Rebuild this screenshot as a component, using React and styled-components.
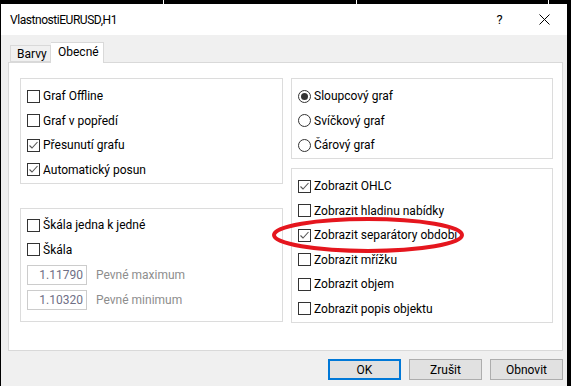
import React from "react";
import styled, { createGlobalStyle } from "styled-components";

const GlobalStyle = createGlobalStyle`
  html, body {
    margin: 0;
    padding: 0;
    background: #000;
  }
  body {
    font-family: Roboto, "Liberation Sans", Arial, sans-serif;
    font-size: 12px;
    color: #000;
  }
`;

const Screen = styled.div`
  position: relative;
  width: 571px;
  height: 386px;
  background: #000;
  overflow: hidden;
  display: flex;
  flex-direction: column;
`;

const TopStrip = styled.div`
  position: relative;
  height: 4px;
  flex-shrink: 0;
`;

const Tick = styled.span`
  position: absolute;
  top: 0;
  left: ${(p) => p.x}px;
  width: 1px;
  height: 4px;
  background: #fff;
`;

const Dialog = styled.div`
  margin-left: 1px;
  width: 566px;
  flex: 1;
  background: #f0f0f0;
  display: flex;
  flex-direction: column;
`;

const TitleBar = styled.div`
  height: 31px;
  background: #fff;
  display: flex;
  align-items: center;
  padding-left: 9px;
`;

const Title = styled.div`
  flex: 1;
  font-size: 12px;
  letter-spacing: -0.45px;
`;

const TitleButton = styled.div`
  width: 45px;
  height: 31px;
  display: flex;
  align-items: center;
  justify-content: center;
  font-size: 13px;
`;

const Body = styled.div`
  flex: 1;
  padding: 7px 4px 7px 7px;
  display: flex;
  flex-direction: column;
`;

const TabStrip = styled.div`
  display: flex;
  align-items: flex-end;
  padding-left: 2px;
  height: 20px;
`;

const Tab = styled.div`
  position: relative;
  box-sizing: border-box;
  height: ${(p) => (p.active ? "21px" : "17px")};
  margin-bottom: ${(p) => (p.active ? "-1px" : "0")};
  padding: ${(p) => (p.active ? "2px 7px 0" : "1px 6px 0")};
  background: ${(p) => (p.active ? "#fff" : "#f0f0f0")};
  border: 1px solid #d9d9d9;
  border-bottom: ${(p) => (p.active ? "none" : "1px solid #d9d9d9")};
  border-left: ${(p) => (p.active ? "none" : "1px solid #d9d9d9")};
  z-index: ${(p) => (p.active ? 2 : 1)};
  width: ${(p) => p.w}px;
  line-height: 15px;
`;

const Panel = styled.div`
  box-sizing: border-box;
  width: 555px;
  height: 289px;
  background: #fff;
  border: 1px solid #d9d9d9;
  padding: 15px 8px 0 11px;
  display: grid;
  grid-template-columns: 263px 262px;
  column-gap: 8px;
  align-items: start;
`;

const Column = styled.div`
  display: flex;
  flex-direction: column;
  gap: ${(p) => p.gap}px;
`;

const Group = styled.div`
  box-sizing: border-box;
  height: ${(p) => p.h}px;
  border: 1px solid #dcdcdc;
  padding: ${(p) => p.top}px 6px 0;
  display: flex;
  flex-direction: column;
`;

const Row = styled.div`
  height: ${(p) => p.h || 24.5}px;
  display: flex;
  align-items: center;
  gap: 3px;
  white-space: nowrap;
`;

const Box = styled.span`
  box-sizing: border-box;
  width: 13px;
  height: 13px;
  border: 1px solid #333;
  background: #fff;
  display: flex;
  align-items: center;
  justify-content: center;
  flex-shrink: 0;
`;

const Radio = styled.span`
  box-sizing: border-box;
  width: 13px;
  height: 13px;
  border: 1px solid #333;
  border-radius: 50%;
  background: #fff;
  display: flex;
  align-items: center;
  justify-content: center;
  flex-shrink: 0;
`;

const Dot = styled.span`
  width: 7px;
  height: 7px;
  border-radius: 50%;
  background: #333;
`;

const Field = styled.div`
  box-sizing: border-box;
  width: 60px;
  height: 20px;
  border: 1px solid #cccccc;
  background: #fff;
  color: #6f6f86;
  text-align: right;
  padding-right: 3px;
  line-height: 18px;
  margin-right: 6px;
  flex-shrink: 0;
`;

const FieldLabel = styled.span`
  color: #8d8d8d;
`;

const ButtonRow = styled.div`
  display: flex;
  justify-content: flex-end;
  gap: 8px;
  margin-top: 8px;
`;

const Button = styled.div`
  box-sizing: border-box;
  width: 73px;
  height: 21px;
  background: #e1e1e1;
  border: ${(p) => (p.primary ? "2px solid #0078d7" : "1px solid #adadad")};
  display: flex;
  align-items: center;
  justify-content: center;
`;

const Highlight = styled.svg`
  position: absolute;
  left: 270px;
  top: 216px;
  pointer-events: none;
`;

function CheckBox({ checked, label }) {
  return (
    <Row>
      <Box>
        {checked && (
          <svg width="11" height="11" viewBox="0 0 11 11">
            <polyline points="1.5,5.5 4,8 9.5,2" fill="none" stroke="#555" strokeWidth="1.1" />
          </svg>
        )}
      </Box>
      <span>{label}</span>
    </Row>
  );
}

function RadioOption({ checked, label }) {
  return (
    <Row>
      <Radio>{checked && <Dot />}</Radio>
      <span>{label}</span>
    </Row>
  );
}

function ValueField({ value, label }) {
  return (
    <Row h={25}>
      <Field>{value}</Field>
      <FieldLabel>{label}</FieldLabel>
    </Row>
  );
}

export default function App() {
  return (
    <Screen>
      <GlobalStyle />
      <TopStrip>
        <Tick x={163} />
        <Tick x={356} />
        <Tick x={548} />
      </TopStrip>
      <Dialog>
        <TitleBar>
          <Title>VlastnostiEURUSD,H1</Title>
          <TitleButton>?</TitleButton>
          <TitleButton>
            <svg width="11" height="11" viewBox="0 0 11 11">
              <path d="M0.5 0.5 L10.5 10.5 M10.5 0.5 L0.5 10.5" stroke="#000" strokeWidth="1" />
            </svg>
          </TitleButton>
        </TitleBar>
        <Body>
          <TabStrip>
            <Tab w={41}>Barvy</Tab>
            <Tab active w={53}>Obecné</Tab>
          </TabStrip>
          <Panel>
            <Column gap={24}>
              <Group h={106} top={5}>
                <CheckBox label="Graf Offline" />
                <CheckBox label="Graf v popředí" />
                <CheckBox checked label="Přesunutí grafu" />
                <CheckBox checked label="Automatický posun" />
              </Group>
              <Group h={114} top={4}>
                <CheckBox label="Škála jedna k jedné" />
                <CheckBox label="Škála" />
                <ValueField value="1.11790" label="Pevné maximum" />
                <ValueField value="1.10320" label="Pevné minimum" />
              </Group>
            </Column>
            <Column gap={9}>
              <Group h={81} top={5}>
                <RadioOption checked label="Sloupcový graf" />
                <RadioOption label="Svíčkový graf" />
                <RadioOption label="Čárový graf" />
              </Group>
              <Group h={155} top={5}>
                <CheckBox checked label="Zobrazit OHLC" />
                <CheckBox label="Zobrazit hladinu nabídky" />
                <CheckBox checked label="Zobrazit separátory období" />
                <CheckBox label="Zobrazit mřížku" />
                <CheckBox label="Zobrazit objem" />
                <CheckBox label="Zobrazit popis objektu" />
              </Group>
            </Column>
          </Panel>
          <ButtonRow>
            <Button primary>OK</Button>
            <Button>Zrušit</Button>
            <Button>Obnovit</Button>
          </ButtonRow>
        </Body>
      </Dialog>
      <Highlight width="196" height="40" viewBox="0 0 196 40">
        <ellipse cx="98" cy="19" rx="94" ry="16" fill="none" stroke="#e5161e" strokeWidth="4" />
      </Highlight>
    </Screen>
  );
}
